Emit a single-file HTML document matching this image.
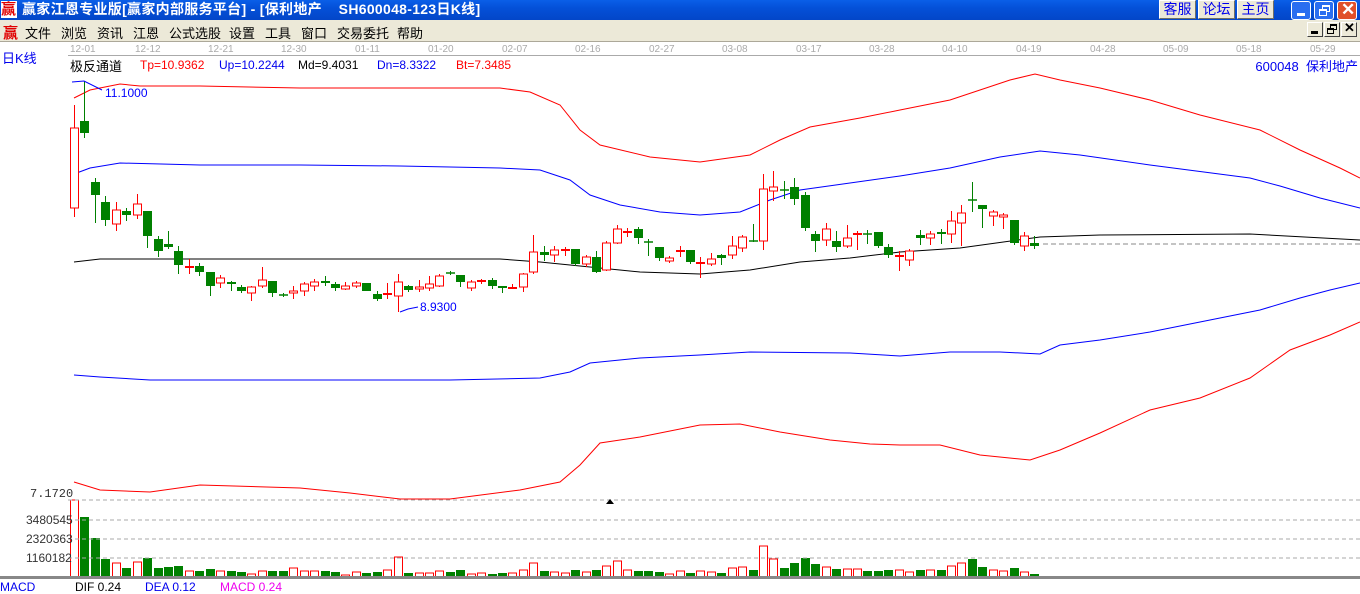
<!DOCTYPE html>
<html><head><meta charset="utf-8"><style>
*{margin:0;padding:0;box-sizing:border-box}
body{width:1360px;height:585px;overflow:hidden;background:#fff;font-family:"Liberation Sans","Noto Sans CJK SC",sans-serif;position:relative}
.t{position:absolute;white-space:nowrap}
#title{position:absolute;left:0;top:0;width:1360px;height:20px;background:linear-gradient(#0a5fe8,#0450d8 40%,#0346c8);}
#menu{position:absolute;left:0;top:20px;width:1360px;height:22px;background:#ece9d8;border-bottom:1px solid #aca899}
.btn{position:absolute;top:0;height:19px;background:#ece9d8;border:1px solid #fff;border-right-color:#716f64;border-bottom-color:#716f64;color:#0000ee;font-size:14px;text-align:center;line-height:17px}
.xp{position:absolute;top:1px;width:20px;height:19px;border:1px solid #fff;border-radius:3px;background:#2a6ef0}
.ib{position:absolute;top:22px;width:16px;height:15px;background:#ece9d8;border:1px solid #fff;border-right-color:#404040;border-bottom-color:#404040}
</style></head><body>
<div id="title">
<div class="t" style="left:1px;top:1px;color:#e00000;font-size:15px;font-weight:bold;background:#fff;line-height:17px;width:16px;height:17px">赢</div>
<div class="t" style="left:22px;top:1px;color:#fff;font-size:14px;font-weight:bold;line-height:17px;letter-spacing:0.3px">赢家江恩专业版[赢家内部服务平台] - [保利地产 &nbsp;&nbsp;&nbsp;SH600048-123日K线]</div>
<div class="btn" style="left:1159px;width:37px">客服</div>
<div class="btn" style="left:1198px;width:37px">论坛</div>
<div class="btn" style="left:1237px;width:37px">主页</div>
<div class="xp" style="left:1291px"><div style="position:absolute;left:5px;top:11px;width:8px;height:3px;background:#fff"></div></div>
<div class="xp" style="left:1314px"><div style="position:absolute;left:7px;top:3px;width:8px;height:7px;border:1px solid #fff;border-top-width:2px"></div><div style="position:absolute;left:4px;top:7px;width:8px;height:7px;border:1px solid #fff;border-top-width:2px;background:#2a6ef0"></div></div>
<div class="xp" style="left:1337px;background:#e0502a"><div class="t" style="left:3px;top:-2px;color:#fff;font-size:17px;font-weight:bold">✕</div></div>
</div>
<div id="menu">
<div class="t" style="left:3px;top:2px;color:#e00000;font-size:15px;font-weight:bold">赢</div>
<div class="t" style="left:25px;top:3px;font-size:13px;color:#000">文件</div>
<div class="t" style="left:61px;top:3px;font-size:13px">浏览</div>
<div class="t" style="left:97px;top:3px;font-size:13px">资讯</div>
<div class="t" style="left:133px;top:3px;font-size:13px">江恩</div>
<div class="t" style="left:169px;top:3px;font-size:13px">公式选股</div>
<div class="t" style="left:229px;top:3px;font-size:13px">设置</div>
<div class="t" style="left:265px;top:3px;font-size:13px">工具</div>
<div class="t" style="left:301px;top:3px;font-size:13px">窗口</div>
<div class="t" style="left:337px;top:3px;font-size:13px">交易委托</div>
<div class="t" style="left:397px;top:3px;font-size:13px">帮助</div>
<div class="ib" style="left:1307px;top:2px"><div style="position:absolute;left:3px;top:8px;width:7px;height:3px;background:#000"></div></div>
<div class="ib" style="left:1324px;top:2px"><div style="position:absolute;left:5px;top:1px;width:7px;height:6px;border:1px solid #000;border-top-width:2px"></div><div style="position:absolute;left:2px;top:5px;width:7px;height:6px;border:1px solid #000;border-top-width:2px;background:#ece9d8"></div></div>
<div class="ib" style="left:1341px;top:2px"><div class="t" style="left:2px;top:-3px;font-size:13px;font-weight:bold">✕</div></div>
</div>
<div class="t" style="left:2px;top:48px;color:#0000ee;font-size:13px">日K线</div>
<div class="t" style="left:70px;top:56px;font-size:13px;color:#000">极反通道</div>
<div class="t" style="left:140px;top:58px;font-size:12px;color:#f00">Tp=10.9362</div>
<div class="t" style="left:219px;top:58px;font-size:12px;color:#00e">Up=10.2244</div>
<div class="t" style="left:298px;top:58px;font-size:12px;color:#000">Md=9.4031</div>
<div class="t" style="left:377px;top:58px;font-size:12px;color:#00e">Dn=8.3322</div>
<div class="t" style="left:456px;top:58px;font-size:12px;color:#f00">Bt=7.3485</div>
<div class="t" style="right:2px;top:56px;font-size:13px;color:#00e">600048&nbsp; 保利地产</div>
<svg id="c" width="1360" height="585" style="position:absolute;left:0;top:0" xmlns="http://www.w3.org/2000/svg"></svg>
<div class="t" style="left:30px;top:487px;font-size:12px;color:#333;font-family:'Liberation Mono',monospace">7.1720</div>
<div class="t" style="left:26px;top:513px;font-size:12px;color:#333">3480545</div>
<div class="t" style="left:26px;top:532px;font-size:12px;color:#333">2320363</div>
<div class="t" style="left:26px;top:551px;font-size:12px;color:#333">1160182</div>
<div class="t" style="left:0;top:580px;font-size:12px;color:#00e">MACD</div>
<div class="t" style="left:75px;top:580px;font-size:12px;color:#000">DIF 0.24</div>
<div class="t" style="left:145px;top:580px;font-size:12px;color:#00e">DEA 0.12</div>
<div class="t" style="left:220px;top:580px;font-size:12px;color:#e0e">MACD 0.24</div>
<script>
var s='';
function L(pts,c,w,d){s+='<polyline fill="none" stroke="'+c+'" stroke-width="'+(w||1)+'"'+(d?' stroke-dasharray="'+d+'"':'')+' points="'+pts+'"/>';}
var dates=[['12-01',70],['12-12',135],['12-21',208],['12-30',281],['01-11',355],['01-20',428],['02-07',502],['02-16',575],['02-27',649],['03-08',722],['03-17',796],['03-28',869],['04-10',942],['04-19',1016],['04-28',1090],['05-09',1163],['05-18',1236],['05-29',1310]];
dates.forEach(function(d){s+='<text x="'+d[1]+'" y="52" font-size="10" fill="#aaa" font-family="Liberation Sans">'+d[0]+'</text>';});
s+='<rect x="68" y="55" width="1292" height="1" fill="#aaa"/>';
L('74,98 90,90 120,84 140,86 200,86 300,88 400,88 500,88 530,92 560,105 580,130 600,145 650,157 700,162 750,155 780,140 810,127 860,118 900,110 950,100 980,90 1010,80 1035,74 1060,80 1100,88 1150,100 1200,115 1260,130 1300,150 1340,168 1360,178','#f00');
L('74,174 90,168 120,163 200,165 300,165 400,166 500,168 540,170 570,180 590,195 620,205 660,212 700,215 740,212 770,200 800,190 850,183 900,176 950,168 1000,157 1040,151 1080,155 1150,165 1250,178 1280,186 1320,198 1360,208','#00f');
L('74,262 100,259 200,259 500,259 540,262 590,267 640,272 700,274 750,270 800,262 850,258 900,252 960,248 1040,237 1100,235 1250,234 1360,240','#000');
L('1043,244 1360,244','#888',1,'5,3');
L('74,375 100,377 150,380 300,380 450,380 540,378 570,372 590,363 640,358 700,355 750,352 850,353 900,356 950,352 1000,352 1040,354 1060,345 1100,340 1150,332 1200,322 1260,310 1300,298 1330,290 1360,283','#00f');
L('74,482 100,490 150,492 200,485 300,488 350,493 400,499 450,499 520,490 560,482 580,465 600,443 640,437 700,425 740,424 780,432 830,440 870,444 900,445 940,445 980,455 1030,460 1060,450 1100,433 1150,410 1200,398 1250,378 1290,350 1330,335 1360,322','#f00');
var K=[[128,208,105,217,'r'],[121,133,81,138,'g'],[182,195,178,223,'g'],[202,220,196,226,'g'],[210,224,202,231,'r'],[211,215,208,221,'g'],[204,215,194,219,'r'],[211,236,211,248,'g'],[239,251,236,257,'g'],[244,247,231,249,'g'],[251,265,246,274,'g'],[267,267,259,274,'r'],[266,272,263,276,'g'],[272,286,272,296,'g'],[278,283,275,288,'r'],[282,283,281,291,'g'],[287,291,285,293,'g'],[287,293,286,301,'r'],[280,286,267,288,'r'],[281,293,281,297,'g'],[295,295,293,297,'g'],[291,293,286,299,'r'],[284,291,282,296,'r'],[282,286,279,291,'r'],[281,283,276,286,'g'],[284,288,282,291,'g'],[286,289,282,290,'r'],[283,286,281,288,'r'],[283,291,283,291,'g'],[294,299,291,301,'g'],[294,294,283,299,'r'],[282,296,274,312,'r'],[286,290,285,292,'g'],[287,289,280,292,'r'],[284,288,276,291,'r'],[276,286,274,287,'r'],[273,273,271,275,'g'],[275,282,275,287,'g'],[282,288,280,291,'r'],
[281,281,279,284,'r'],[280,286,278,289,'g'],[286,288,286,293,'g'],[288,288,284,289,'r'],[274,287,273,292,'r'],[252,272,235,274,'r'],[252,255,246,261,'g'],[250,255,246,262,'r'],[250,250,247,256,'r'],[249,264,249,266,'g'],[257,264,255,267,'r'],[257,272,251,273,'g'],[243,270,241,271,'r'],[229,243,225,244,'r'],[232,232,228,237,'r'],[229,238,227,244,'g'],[242,242,239,256,'g'],[247,258,247,261,'g'],
[258,261,256,263,'r'],[251,251,246,257,'r'],[250,262,250,264,'g'],[263,263,257,278,'r'],[259,264,253,266,'r'],[255,258,254,265,'g'],[246,255,236,259,'r'],[237,248,235,252,'r'],[241,241,224,242,'g'],[189,241,174,250,'r'],[187,191,171,201,'r'],[190,190,181,199,'g'],[187,199,178,205,'g'],[195,228,192,231,'g'],[234,241,231,252,'g'],[229,240,223,246,'r'],[241,247,231,252,'g'],[238,246,225,248,'r'],[234,234,231,250,'r'],[234,234,230,244,'g'],[232,246,232,248,'g'],[247,255,244,258,'g'],[256,256,251,271,'r'],[251,260,249,266,'r'],[235,238,230,245,'g'],[234,238,231,245,'r'],[232,234,229,244,'g'],[221,234,211,243,'r'],[213,223,205,246,'r'],[200,200,182,212,'g'],[205,209,205,228,'g'],[212,216,210,226,'r'],[215,217,213,229,'r'],[220,243,220,245,'g'],[236,246,232,251,'r'],[243,246,236,249,'g']];
var V=[500,517,538,559,563,568,562,558,568,567,566,571,571,569,571,571,572,574,571,571,571,568,571,571,571,572,575,572,573,572,570,557,573,573,573,571,572,570,574,573,574,573,573,570,563,571,572,573,570,572,570,566,561,570,571,571,572,574,571,573,571,572,573,568,567,570,546,559,568,563,558,564,567,569,569,569,571,571,570,570,572,570,570,570,566,563,559,567,570,571,568,572,574];
K.forEach(function(k,i){var x=Math.round(74+10.44*i)+.5;
 var t=k[0],b=k[1];
 if(k[4]=='r'){
  if(b-t<1){s+='<line x1="'+x+'" y1="'+k[2]+'" x2="'+x+'" y2="'+k[3]+'" stroke="#f00"/><line x1="'+(x-4.5)+'" y1="'+t+'" x2="'+(x+4.5)+'" y2="'+t+'" stroke="#f00" stroke-width="2"/>';}
  else{s+='<line x1="'+x+'" y1="'+k[2]+'" x2="'+x+'" y2="'+t+'" stroke="#f00"/><line x1="'+x+'" y1="'+b+'" x2="'+x+'" y2="'+k[3]+'" stroke="#f00"/><rect x="'+(x-4)+'" y="'+t+'" width="8" height="'+(b-t)+'" fill="#fff" stroke="#f00"/>';}
 }else{
  s+='<line x1="'+x+'" y1="'+k[2]+'" x2="'+x+'" y2="'+k[3]+'" stroke="#008000"/>';
  if(b-t<1)s+='<line x1="'+(x-4.5)+'" y1="'+t+'" x2="'+(x+4.5)+'" y2="'+t+'" stroke="#008000" stroke-width="1.5"/>';
  else s+='<rect x="'+(x-4.5)+'" y="'+t+'" width="9" height="'+Math.max(b-t,2)+'" fill="#008000"/>';
 }
 var v=V[i],vc=K[i][4];
 if(vc=='r')s+='<rect x="'+(x-4)+'" y="'+v+'" width="8" height="'+(577-v)+'" fill="#fff" stroke="#f00"/>';
 else s+='<rect x="'+(x-4.5)+'" y="'+v+'" width="9" height="'+(577-v)+'" fill="#008000"/>';
});
L('72,82 84,81 102,90','#00f');
s+='<text x="105" y="97" font-size="12" fill="#00f" font-family="Liberation Sans">11.1000</text>';
L('400,312 408,309 418,307','#00f');
s+='<text x="420" y="311" font-size="12" fill="#00f" font-family="Liberation Sans">8.9300</text>';
[500,520,539,558].forEach(function(y){L('68,'+y+' 1360,'+y,'#aaa',1,'4,3');});
s+='<polygon points="610,499 606,504 614,504" fill="#000"/>';
s+='<rect x="0" y="576" width="1360" height="3" fill="#888"/>';
document.getElementById('c').innerHTML=s;
</script>
</body></html>
